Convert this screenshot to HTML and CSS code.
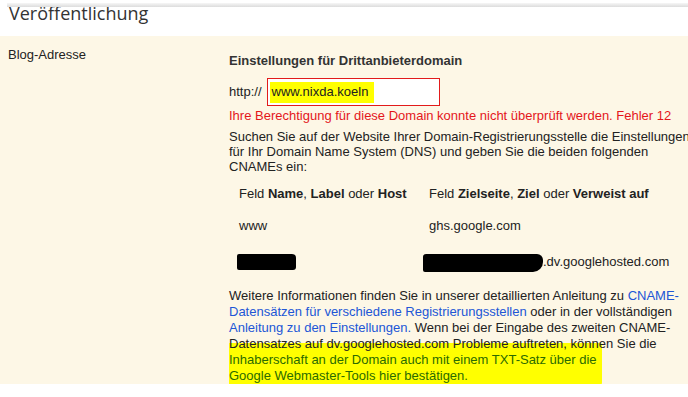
FILE: index.html
```html
<!DOCTYPE html>
<html lang="de">
<head>
    <meta charset="utf-8">
    <title>Veröffentlichung</title>
    <link rel="stylesheet" href="styles.css">
</head>
<body>
    <div class="top-shadow"></div>
    <h1 class="page-title">Veröffentlichung</h1>

    <div class="settings-panel">
        <div class="settings-label">Blog-Adresse</div>

        <div class="settings-body">
            <h3 class="domain-title">Einstellungen für Drittanbieterdomain</h3>

            <div class="domain-row">
                <span>http://</span>
                <div class="domain-input"><span class="marker-text">www.nixda.koeln</span></div>
            </div>
            <p class="domain-error">Ihre Berechtigung für diese Domain konnte nicht überprüft werden. Fehler 12</p>

            <p class="hint">Suchen Sie auf der Website Ihrer Domain-Registrierungsstelle die Einstellungen für Ihr Domain Name System (DNS) und geben Sie die beiden folgenden CNAMEs ein:</p>

            <table class="cname-table">
                <tr>
                    <th>Feld <b>Name</b>, <b>Label</b> oder <b>Host</b></th>
                    <th>Feld <b>Zielseite</b>, <b>Ziel</b> oder <b>Verweist auf</b></th>
                </tr>
                <tr>
                    <td>www</td>
                    <td>ghs.google.com</td>
                </tr>
                <tr class="secret-row">
                    <td><span class="redacted redacted-name"></span></td>
                    <td><span class="redacted redacted-target"></span>.dv.googlehosted.com</td>
                </tr>
            </table>

            <p class="more-info">Weitere Informationen finden Sie in unserer detaillierten Anleitung zu <a href="#">CNAME-Datensätzen für verschiedene Registrierungsstellen</a> oder in der vollständigen <a href="#">Anleitung zu den Einstellungen.</a> Wenn bei der Eingabe des zweiten CNAME-Datensatzes auf dv.googlehosted.com Probleme auftreten, können Sie die <a href="#" class="marked">Inhaberschaft an der Domain auch mit einem TXT-Satz über die<br>Google Webmaster-Tools hier bestätigen.</a></p>
        </div>
    </div>
</body>
</html>
```

FILE: styles.css
```css
/* Grundlayout */
body {
    margin: 0;
    font-family: "Liberation Sans", Arial, sans-serif;
    font-size: 13px;
    color: #222;
    background-color: #fff;
    overflow: hidden;
}

.top-shadow {
    position: absolute;
    top: 3px;
    left: 7px;
    right: 0;
    height: 4px;
    background: linear-gradient(#f6f6f6, #dcdcdc);
}

.page-title {
    margin: 0;
    padding: 1px 0 11px 9px;
    font-family: "Open Sans", sans-serif;
    font-size: 18px;
    font-weight: normal;
    line-height: 24px;
    color: #333;
}

.settings-panel {
    position: relative;
    z-index: 0;
    display: grid;
    grid-template-columns: 229px 465px;
    padding-top: 11px;
    background-color: #fdf7e6;
}

.settings-label {
    padding-left: 8px;
    line-height: 16px;
}

.settings-body {
    padding-top: 6px;
}

.domain-title {
    margin: 0;
    font-size: 13px;
    line-height: 16px;
    color: #333;
}

.domain-row {
    display: flex;
    align-items: center;
    gap: 5px;
    margin-top: 9px;
    line-height: 16px;
}

.domain-input {
    box-sizing: border-box;
    display: flex;
    align-items: center;
    width: 173px;
    height: 28px;
    padding-left: 2px;
    border: 1px solid #e21b1b;
    background-color: #fff;
}

.marker-text {
    padding: 2px 6px 3px 2px;
    background-color: #ff0;
}

.domain-error {
    margin: 2px 0 0;
    line-height: 16px;
    color: #e4161b;
}

.hint {
    margin: 5px 0 0;
    line-height: 15px;
}

.cname-table {
    margin-top: 4px;
    border-collapse: collapse;
}

.cname-table th,
.cname-table td {
    padding: 8px 10px;
    line-height: 16px;
    font-weight: normal;
    text-align: left;
}

.cname-table th:first-child,
.cname-table td:first-child {
    width: 170px;
}

.secret-row td {
    padding-top: 12px;
}

.redacted {
    display: inline-block;
    height: 16px;
    vertical-align: top;
    background-color: #000;
    border-radius: 2px 4px 3px 2px;
}

.redacted-name {
    width: 59px;
    margin-left: -2px;
}

.redacted-target {
    width: 120px;
    height: 18px;
    margin-left: -6px;
    margin-bottom: -2px;
    border-radius: 3px 6px 10px 2px;
}

.more-info {
    margin: 10px 0 0;
    line-height: 16px;
}

.more-info a {
    color: #2156d6;
    text-decoration: none;
}

.more-info a.marked {
    position: relative;
    display: inline-block;
    color: #2b6b00;
}

/* Markierung mit Textmarker */
.marked::before {
    content: "";
    position: absolute;
    z-index: -1;
    top: -9px;
    left: 0;
    width: 373px;
    height: 45px;
    background-color: #ff0;
    border-radius: 0 2px 6px 0;
}

.marked::after {
    content: "";
    position: absolute;
    z-index: -1;
    top: 35px;
    left: 6px;
    width: 300px;
    height: 9px;
    background-color: #ff0;
    border-radius: 0 0 12px 6px;
}
```
